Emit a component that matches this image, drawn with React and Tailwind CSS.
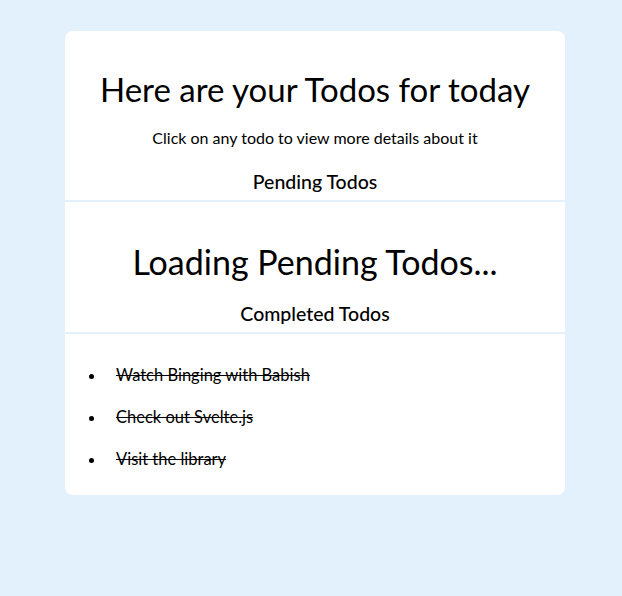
const completed = ["Watch Binging with Babish", "Check out Svelte.js", "Visit the library"];

export default function App() {
  return (
    <div className="min-h-[596px] bg-[#e3f1fd] pt-[31px] pb-[101px]" style={{ fontFamily: "Lato, 'Noto Sans', sans-serif" }}>
      <div className="ml-[65px] w-[500px] rounded-lg bg-white text-black text-center">
        <h1 className="pt-[39px] text-[33px] leading-[38px]">Here are your Todos for today</h1>
        <p className="mt-[18px] text-[16px] leading-[24px]">Click on any todo to view more details about it</p>
        <h2 className="mt-[20px] text-[19.5px] leading-[24px] font-medium">Pending Todos</h2>
        <div className="mt-[6px] border-b-2 border-[#e3f1fd]" />

        <h3 className="mt-[41px] text-[34px] leading-[38px]">Loading Pending Todos...</h3>
        <h2 className="mt-[21px] text-[19.5px] leading-[24px] font-medium">Completed Todos</h2>
        <div className="mt-[6px] border-b-2 border-[#e3f1fd]" />

        <ul className="list-disc pl-[41px] pt-[31px] pb-[26px] text-left text-[16.5px] leading-[20px]">
          {completed.map((t) => (
            <li key={t} className="mb-[22px] last:mb-0 line-through pl-[10px]">
              {t}
            </li>
          ))}
        </ul>
      </div>
    </div>
  );
}
